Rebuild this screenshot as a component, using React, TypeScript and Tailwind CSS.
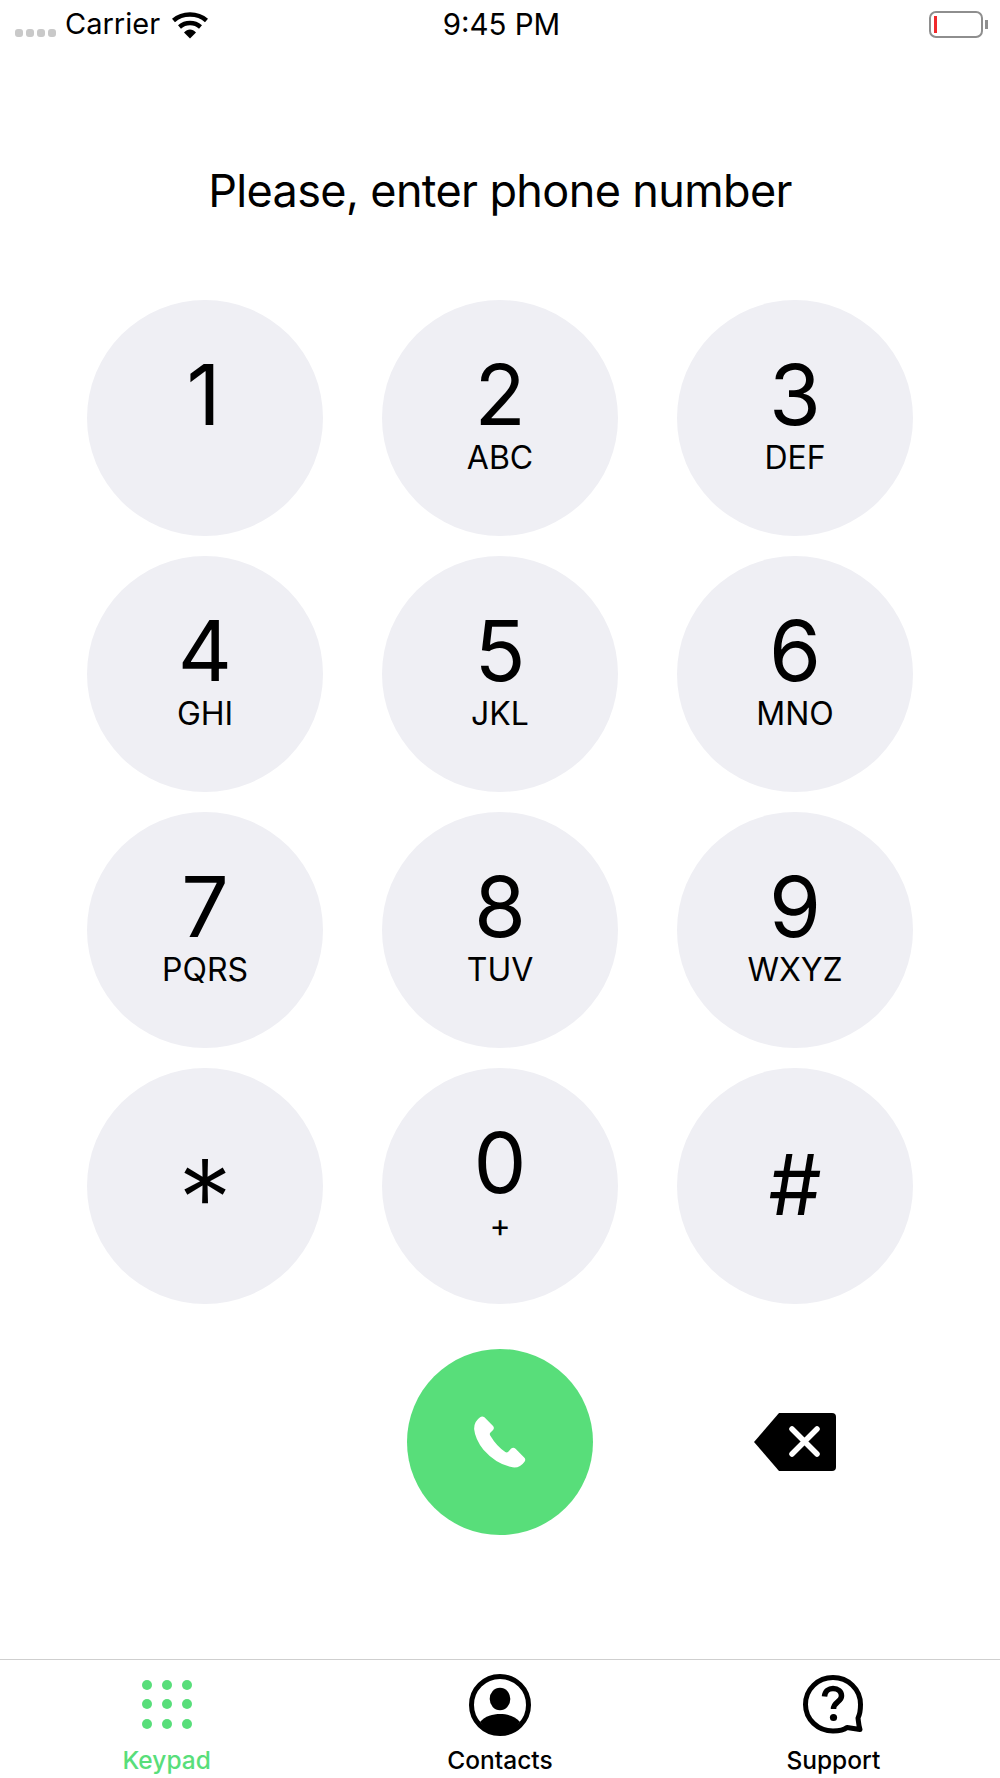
import React from "react";

const FONT = "[font-family:Inter,'Liberation_Sans',sans-serif]";

const KEYS: [string, string][] = [
  ["1", ""], ["2", "ABC"], ["3", "DEF"],
  ["4", "GHI"], ["5", "JKL"], ["6", "MNO"],
  ["7", "PQRS"], ["8", "TUV"], ["9", "WXYZ"],
  ["*", ""], ["0", "+"], ["#", ""],
];

function Wifi() {
  return (
    <svg width="38" height="28" viewBox="0 0 38 28" fill="none" className="block">
      <path d="M2.5 9.5C11.5 1.5 26.5 1.5 35.5 9.5" stroke="#000" strokeWidth="4.5" />
      <path d="M8.5 16C14.5 10.8 23.5 10.8 29.5 16" stroke="#000" strokeWidth="4.5" />
      <path d="M13 21.5C16.5 17.5 21.5 17.5 25 21.5L19 27.5Z" fill="#000" />
    </svg>
  );
}

function Phone() {
  return (
    <svg width="52" height="52" viewBox="222 228 156 157" className="block">
      <path
        fill="#fff"
        d="M240 232Q246 227 253 232L279 258Q284 264 279 270L270 279Q268 283 271 288Q290 320 316 337Q321 340 325 336L333 327Q340 321 347 327L373 353Q379 359 374 366Q360 386 338 383Q290 375 250 330Q225 298 222 268Q221 245 240 232Z"
      />
    </svg>
  );
}

function DeleteKey() {
  return (
    <svg width="82" height="58" viewBox="0 0 82 58" className="block">
      <path d="M25 0H78Q82 0 82 4V54Q82 58 78 58H25L0 29Z" fill="#000" />
      <path d="M38 16L63 41M63 16L38 41" stroke="#fff" strokeWidth="5.5" strokeLinecap="round" />
    </svg>
  );
}

function KeypadIcon() {
  return (
    <svg width="50" height="50" viewBox="0 0 50 50" className="block">
      {[5, 25, 45].map((x) =>
        [5, 24, 44].map((y) => <circle key={`${x}-${y}`} cx={x} cy={y} r="5" fill="#58de7a" />)
      )}
    </svg>
  );
}

function ContactsIcon() {
  return (
    <svg width="62" height="62" viewBox="0 0 62 62" className="block">
      <circle cx="31" cy="31" r="28.5" fill="none" stroke="#000" strokeWidth="5" />
      <ellipse cx="31" cy="25" rx="10.3" ry="11.2" fill="#000" />
      <path d="M11 48C16 42 24 40 31 40C38 40 46 42 51 48C46 55 39 60 31 60C23 60 16 55 11 48Z" fill="#000" />
    </svg>
  );
}

function SupportIcon() {
  return (
    <svg width="62" height="60" viewBox="0 0 62 60" className="block">
      <path
        d="M31 2.5C16 2.5 3.5 14 3.5 29.5C3.5 44.5 16 56 31 56C37 56 42 55 45 52.5L58 54.5C56.5 50 56.5 46 56 43C58 39 58.5 34 58.5 29.5C58.5 14 46 2.5 31 2.5Z"
        fill="none"
        stroke="#000"
        strokeWidth="5"
        strokeLinejoin="round"
      />
      <path d="M22.5 21.5C23 16 27 13.5 31 13.5C36 13.5 39.5 16.5 39.5 21C39.5 27 31.5 27 31.5 34" fill="none" stroke="#000" strokeWidth="5.5" />
      <circle cx="31.5" cy="42.5" r="3.6" fill="#000" />
    </svg>
  );
}

function Tab({ icon, label, active }: { icon: React.ReactNode; label: string; active?: boolean }) {
  return (
    <div className="flex flex-col items-center">
      <div className="h-[62px] flex items-center justify-center">{icon}</div>
      <span className={`mt-[9px] text-[24.5px] leading-[30px] font-medium ${active ? "text-[#58de7a]" : "text-black"}`}>{label}</span>
    </div>
  );
}

export default function App() {
  return (
    <div className={`relative w-[1000px] h-[1778px] bg-white overflow-hidden text-black flex flex-col ${FONT}`}>
      {/* status bar */}
      <div className="h-[46px] shrink-0 grid grid-cols-3 items-center pl-[15px] pr-[12px]">
        <div className="flex items-center">
          <div className="flex gap-[3px] mt-[19px]">
            {[0, 1, 2, 3].map((i) => (
              <span key={i} className="w-[8px] h-[8px] rounded-[3px] bg-[#c9c9c9]" />
            ))}
          </div>
          <span className="ml-[9px] text-[29px] leading-[32px] font-normal mt-[2px]">Carrier</span>
          <span className="ml-[11px] mt-[3px]"><Wifi /></span>
        </div>
        <span className="text-center text-[29.5px] leading-[32px] font-normal mt-[2px] whitespace-nowrap">9:45 PM</span>
        <div className="flex items-center justify-end gap-[2px] mt-[2px]">
          <div className="w-[54px] h-[27px] rounded-[7px] border-[2.5px] border-[#8e8e8e] pl-[3px] py-[3px]">
            <div className="w-[2.5px] h-full bg-[#f0292c]" />
          </div>
          <div className="w-[3px] h-[9px] bg-[#8e8e8e]" />
        </div>
      </div>

      {/* heading */}
      <h1 className="mt-[118px] text-center text-[45px] leading-[54px] font-normal tracking-[-0.014em]">Please, enter phone number</h1>

      {/* keypad */}
      <div className="mt-[82px] mx-auto grid grid-cols-[236px_236px_236px] gap-x-[59px] gap-y-[20px]">
        {KEYS.map(([digit, letters]) => (
          <button key={digit} className="w-[236px] h-[236px] rounded-full bg-[#efeff4] flex flex-col items-center">
            {letters ? (
              <>
                <span className="mt-[60px] text-[84px] leading-[70px] font-normal">{digit}</span>
                <span className="mt-[13px] text-[32px] leading-[30px]">{letters}</span>
              </>
            ) : digit === "1" ? (
              <span className="mt-[60px] text-[84px] leading-[70px] font-normal -ml-[3px]">1</span>
            ) : digit === "*" ? (
              <span className="mt-[96px] text-[108px] leading-[70px] font-light">*</span>
            ) : (
              <span className="mt-[82px] text-[84px] leading-[70px] font-normal">{digit}</span>
            )}
          </button>
        ))}
      </div>

      {/* call row */}
      <div className="mt-[45px] mx-auto w-[826px] grid grid-cols-[236px_236px_236px] gap-x-[59px] items-center">
        <div />
        <div className="flex justify-center">
          <button className="w-[186px] h-[186px] rounded-full bg-[#58de7a] flex items-center justify-center">
            <Phone />
          </button>
        </div>
        <div className="flex justify-center">
          <DeleteKey />
        </div>
      </div>

      {/* tab bar */}
      <div className="mt-auto h-[119px] border-t-[1.5px] border-[#cfcfcf] grid grid-cols-3 shrink-0 pt-[14px]">
        <Tab icon={<KeypadIcon />} label="Keypad" active />
        <Tab icon={<ContactsIcon />} label="Contacts" />
        <Tab icon={<SupportIcon />} label="Support" />
      </div>
    </div>
  );
}
